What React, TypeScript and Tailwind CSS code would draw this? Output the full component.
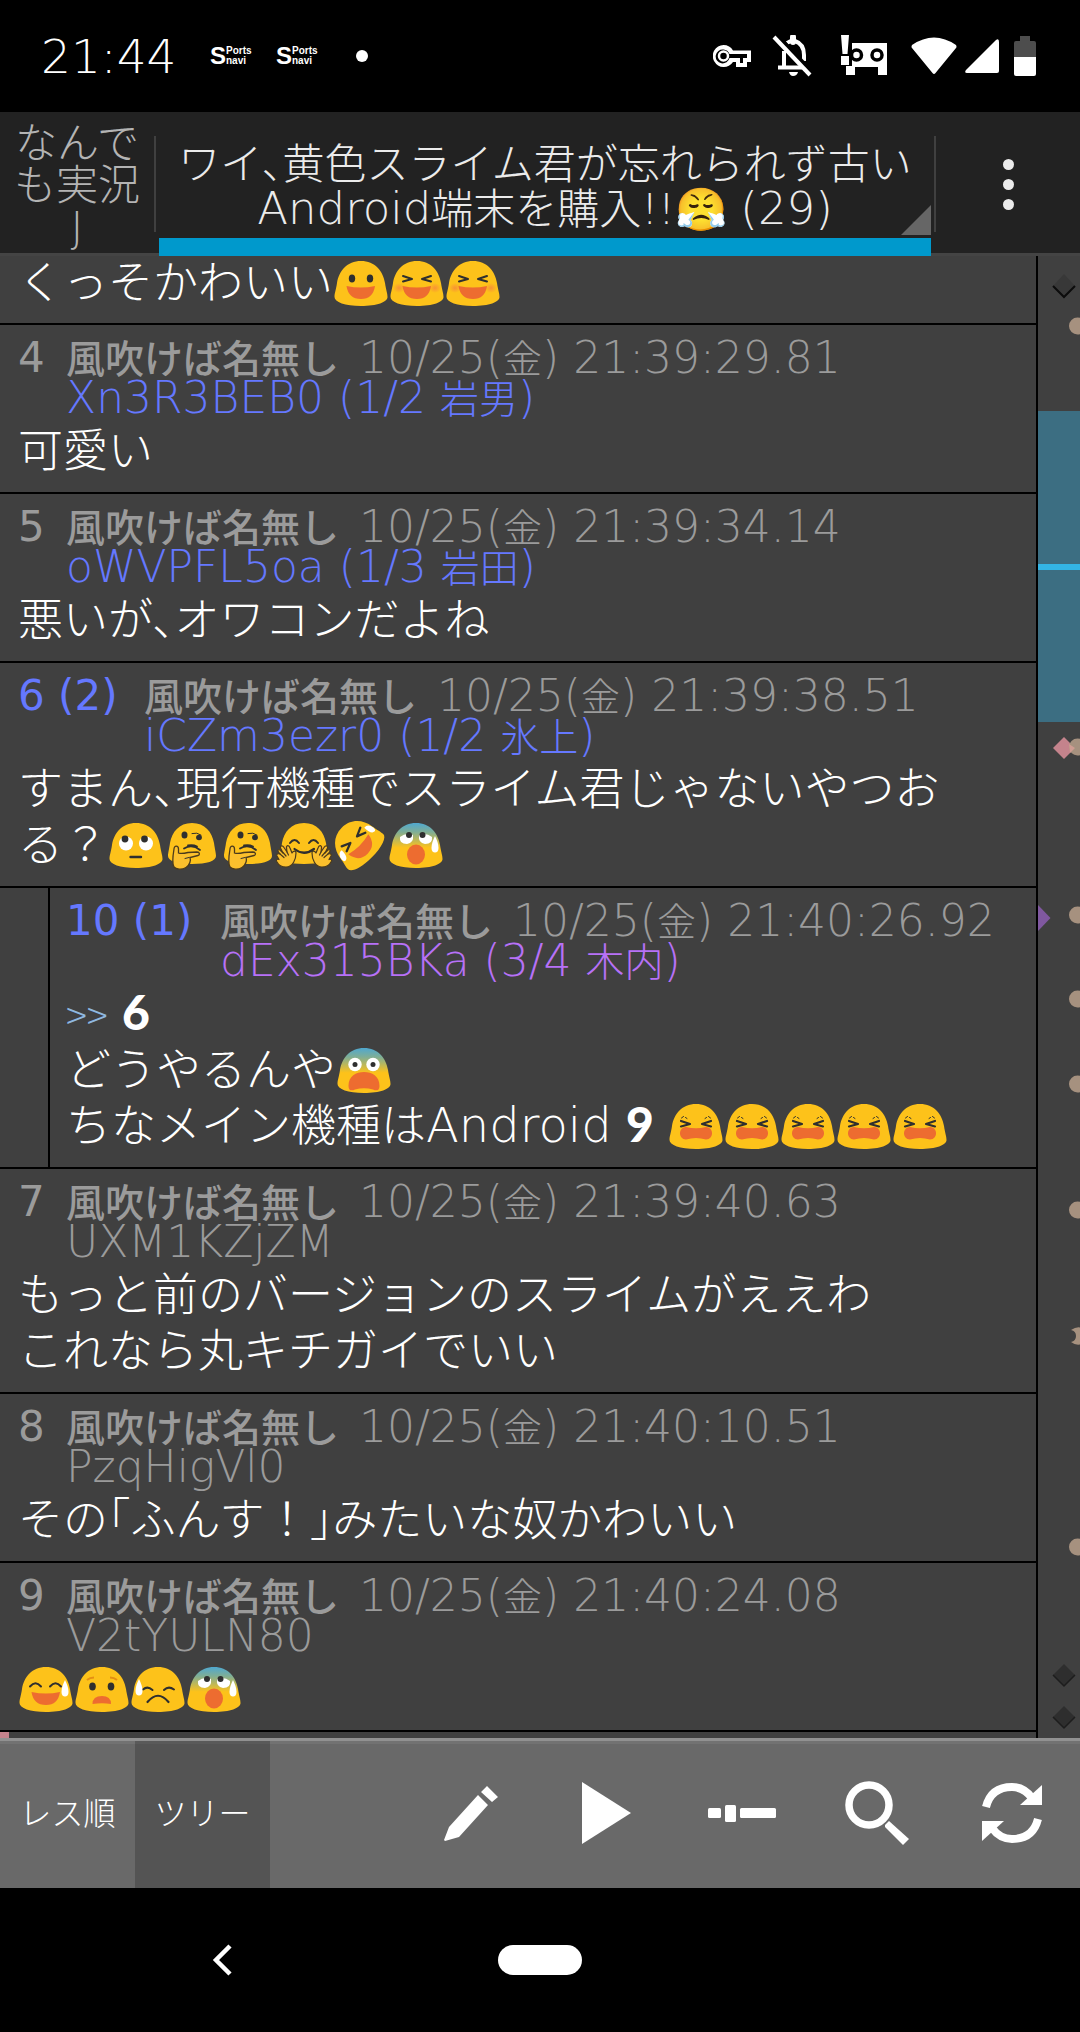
import type { ReactNode } from "react";

type Face =
  | "grin"
  | "laugh"
  | "roll"
  | "think"
  | "hug"
  | "rofl"
  | "anxious"
  | "scream"
  | "weary"
  | "sweatSmile"
  | "worried"
  | "coldSweat";

const labels: Record<Face, string> = {
  grin: "😃",
  laugh: "😆",
  roll: "🙄",
  think: "🤔",
  hug: "🤗",
  rofl: "🤣",
  anxious: "😰",
  scream: "😨",
  weary: "😫",
  sweatSmile: "😅",
  worried: "😟",
  coldSweat: "😓",
};

const BLOB =
  "M28 2C42 2 50 12 52 24C53 31 54.5 34 54.5 38C54.5 43 44 47 28 47C12 47 1.5 43 1.5 38C1.5 34 3 31 4 24C6 12 14 2 28 2Z";
const SMALL_BLOB =
  "M28 2C41 2 48 11 50 22C51 29 52 32 52 35C52 40 43 43 28 43C13 43 4 40 4 35C4 32 5 29 6 22C8 11 15 2 28 2Z";

const Dark = ({ d, w = 2 }: { d: string; w?: number }) => (
  <path d={d} fill="none" stroke="#2f2f2f" strokeWidth={w} strokeLinecap="round" strokeLinejoin="round" />
);

const Cheeks = () => (
  <>
    <ellipse cx="10" cy="29" rx="6" ry="5" fill="url(#cheek)" />
    <ellipse cx="46" cy="29" rx="6" ry="5" fill="url(#cheek)" />
  </>
);

const BigSmile = () => <path d="M13.500 27Q28 30 42 27Q40 40 28 40Q15.500 40 13.500 27Z" fill="#ed6c30" />;

const Tear = ({ x, y }: { x: number; y: number }) => (
  <path
    d="M0 -8C2 -4 3.500 0 3.500 4C3.500 7 2 8.500 0 8.500C-2 8.500 -3.500 7 -3.500 4C-3.500 0 -2 -4 0 -8Z"
    transform={`translate(${x} ${y})`}
    fill="#fff"
  />
);

const Hand = () => (
  <g fill="#fbc02d" stroke="#4a3a1c" strokeWidth="1.200" strokeLinecap="round" strokeLinejoin="round">
    <path d="M4 33C1 30 1.500 28 4 29L7 32L4.500 27C4 24.500 6.500 24 8 26.500L11 31L10.500 26.500C10.500 24 13 24 14 27L16 32C17 30 20 29 20 32C20 38 17 46 10 46C4 46 2 43 1 41C-0.500 39 1 37.500 3 38.500L1 35C0 33 2 32 4 33Z" />
    <path d="M4 33L8 36.500M7 31.500L10 35M11 31L12.500 34" fill="none" />
  </g>
);

const faces: Record<Face, ReactNode> = {
  grin: (
    <>
      <ellipse cx="19" cy="19.500" rx="3.200" ry="4" fill="#2f2f2f" />
      <ellipse cx="37" cy="19.500" rx="3.200" ry="4" fill="#2f2f2f" />
      <BigSmile />
    </>
  ),
  laugh: (
    <>
      <Cheeks />
      <Dark d="M14 17L23 20L14 22.500M42 17L33 20L42 22.500" />
      <BigSmile />
    </>
  ),
  roll: (
    <>
      <circle cx="18" cy="22.500" r="7" fill="#fff" />
      <circle cx="38" cy="22.500" r="7" fill="#fff" />
      <circle cx="17" cy="18" r="3.400" fill="#2f2f2f" />
      <circle cx="36.500" cy="18" r="3.400" fill="#2f2f2f" />
      <Dark d="M22.500 36H33" w={2.4} />
    </>
  ),
  think: (
    <>
      <ellipse cx="20.500" cy="14" rx="3" ry="3.500" fill="#2f2f2f" />
      <ellipse cx="35" cy="16.500" rx="2.900" ry="2.700" fill="#2f2f2f" />
      <Dark d="M28 12.500Q33 11 37 14" w={1} />
      <Dark d="M20 27.500Q28 22.500 36 29M24 24.500Q29 23.500 33 25.500" w={1.8} />
      <path
        d="M10 28C10 24 14.500 24.500 14.500 28L14.500 32C17 33 20 32.500 24 31.500L33 31C36 31 36 34 34 34.500L26 36.500C27 39 26 44 22 46.500C18 49 12 48.500 10 46C8 43 9 34 10 28Z"
        fill="#fbc02d"
        stroke="#4a3a1c"
        strokeWidth="1.300"
      />
      <Dark d="M25 36.500L21 37.500" w={1} />
    </>
  ),
  hug: (
    <>
      <Cheeks />
      <Dark d="M14 22Q18.500 16 23 22M33 22Q37.500 16 42 22" />
      <Dark d="M18.500 28Q28 35.500 38 28" w={2.2} />
      <Hand />
      <g transform="translate(56 0) scale(-1 1)">
        <Hand />
      </g>
    </>
  ),
  rofl: (
    <>
      <Dark d="M14 16L23 20L14 23.500M42 16L33 20L42 23.500" w={2.4} />
      <path d="M13 27Q28 31 43 27Q41 41 28 41Q15 41 13 27Z" fill="#ed6c30" />
      <path d="M11 19Q5 18 4 26Q4 31 8 29Q11 27 11 19ZM45 19Q51 18 52 26Q52 31 48 29Q45 27 45 19Z" fill="#fff" />
    </>
  ),
  anxious: (
    <>
      <path d="M12 16Q11 23 19 23Q26 22 25 14Q18 11 12 16Z" fill="#fff" />
      <path d="M44 16Q45 23 37 23Q30 22 31 14Q38 11 44 16Z" fill="#fff" />
      <circle cx="21" cy="14" r="3" fill="#2f2f2f" />
      <circle cx="34.500" cy="14" r="3" fill="#2f2f2f" />
      <ellipse cx="28" cy="33.500" rx="9" ry="10" fill="#ed6c30" />
      <Tear x={47} y={23} />
    </>
  ),
  scream: (
    <>
      <circle cx="19" cy="18.500" r="6.700" fill="#fff" />
      <circle cx="37" cy="18.500" r="6.700" fill="#fff" />
      <circle cx="19" cy="18.500" r="2.500" fill="#2f2f2f" />
      <circle cx="37" cy="18.500" r="2.500" fill="#2f2f2f" />
      <path d="M12.500 40C12.500 30 20 26 28 26C36 26 43.500 30 43.500 40C43.500 45 40 45 37 43.500Q28 41 19 43.500C16 45 12.500 45 12.500 40Z" fill="#ed6c30" />
    </>
  ),
  weary: (
    <>
      <Dark d="M13 19L22 22L13 24.500M43 19L34 22L43 24.500" w={2.2} />
      <Dark d="M13.500 16L15.500 14.500M17.500 15.500L19 16.500M42.500 16L40.500 14.500M38.500 15.500L37 16.500" w={1} />
      <path d="M18 25Q28 27.500 38 25C46 25 46 37.500 38 37.500Q28 34.500 18 37.500C10 37.500 10 25 18 25Z" fill="#ed6c30" />
    </>
  ),
  sweatSmile: (
    <>
      <Dark d="M12 21.500Q17.500 15 23 21.500M32 21.500Q37.500 15 43 21.500" />
      <BigSmile />
      <Tear x={47} y={23} />
    </>
  ),
  worried: (
    <>
      <path d="M13 15Q16 12.500 20 12.500M43 15Q40 12.500 36 12.500" fill="none" stroke="#e58f12" strokeWidth="2" />
      <ellipse cx="18.500" cy="21.500" rx="3.300" ry="4" fill="#2f2f2f" />
      <ellipse cx="37" cy="21.500" rx="3.300" ry="4" fill="#2f2f2f" />
      <path d="M18.500 39Q18.500 31 28 31Q37 31 37 39Q28 37.500 18.500 39Z" fill="#ed6c30" />
    </>
  ),
  coldSweat: (
    <>
      <Dark d="M13 24.500Q17.500 20.500 22.500 25M34 25Q38.500 20.500 44 24.500" />
      <Dark d="M17.500 37Q28 24.500 38.500 37" w={2.2} />
      <Tear x={9} y={22} />
    </>
  ),
};

function Emoji({ face, count = 1 }: { face: Face; count?: number }) {
  const shocked = face === "anxious" || face === "scream";
  const small = face === "think" || face === "hug";
  return (
    <>
      {Array.from({ length: count }, (_, i) => (
        <svg
          key={i}
          role="img"
          aria-label={labels[face]}
          viewBox="0 0 56 50"
          className="inline-block h-[50px] w-14 overflow-visible align-[-10px]"
        >
          <g transform={face === "rofl" ? "translate(25 22) rotate(-45) scale(0.94) translate(-28 -25)" : undefined}>
            <path d={small ? SMALL_BLOB : BLOB} fill={shocked ? "url(#shock)" : "#fdc21a"} />
            {faces[face]}
          </g>
        </svg>
      ))}
    </>
  );
}

// Kanji next to the wide latin face reads better a step smaller
const Kanji = ({ children }: { children: ReactNode }) => <span className="text-[39px]">{children}</span>;

const Strong = ({ children }: { children: ReactNode }) => (
  <span className="font-['Lato',sans-serif] text-[48px] leading-none font-black">{children}</span>
);

type Post = {
  no: string;
  replied?: boolean;
  nested?: boolean;
  time: string;
  id: string;
  count?: string;
  nick?: string;
  idColor: string;
  body: ReactNode[];
};

const posts: Post[] = [
  {
    no: "4",
    time: "21:39:29.81",
    id: "Xn3R3BEB0",
    count: "1/2",
    nick: "岩男",
    idColor: "text-[#6578ff]",
    body: ["可愛い"],
  },
  {
    no: "5",
    time: "21:39:34.14",
    id: "oWVPFL5oa",
    count: "1/3",
    nick: "岩田",
    idColor: "text-[#6578ff]",
    body: ["悪いが、オワコンだよね"],
  },
  {
    no: "6 (2)",
    replied: true,
    time: "21:39:38.51",
    id: "iCZm3ezr0",
    count: "1/2",
    nick: "氷上",
    idColor: "text-[#6578ff]",
    body: [
      "すまん、現行機種でスライム君じゃないやつお",
      <>
        る？
        <Emoji face="roll" />
        <Emoji face="think" count={2} />
        <Emoji face="hug" />
        <Emoji face="rofl" />
        <Emoji face="anxious" />
      </>,
    ],
  },
  {
    no: "10 (1)",
    replied: true,
    nested: true,
    time: "21:40:26.92",
    id: "dEx315BKa",
    count: "3/4",
    nick: "木内",
    idColor: "text-[#b771f7]",
    body: [
      <>
        <a href="#6" className="font-['Noto_Sans_CJK_JP',sans-serif] text-[39px] leading-none text-[#8fb8e0]">
          &gt;&gt;
        </a>{" "}
        <Strong>6</Strong>
      </>,
      <>
        どうやるんや
        <Emoji face="scream" />
      </>,
      <>
        ちなメイン機種は<span className="text-[48px] leading-none">Android</span> <Strong>9</Strong>{" "}
        <Emoji face="weary" count={5} />
      </>,
    ],
  },
  {
    no: "7",
    time: "21:39:40.63",
    id: "UXM1KZjZM",
    idColor: "text-[#9b9b9b]",
    body: ["もっと前のバージョンのスライムがええわ", "これなら丸キチガイでいい"],
  },
  {
    no: "8",
    time: "21:40:10.51",
    id: "PzqHigVl0",
    idColor: "text-[#9b9b9b]",
    body: [
      <>
        その「ふんす<span className="[font-feature-settings:normal]">！</span>」みたいな奴かわいい
      </>,
    ],
  },
  {
    no: "9",
    time: "21:40:24.08",
    id: "V2tYULN80",
    idColor: "text-[#9b9b9b]",
    body: [
      <>
        <Emoji face="sweatSmile" />
        <Emoji face="worried" />
        <Emoji face="coldSweat" />
        <Emoji face="anxious" />
      </>,
    ],
  },
];

function PostRow({ post }: { post: Post }) {
  return (
    <li id={post.no.split(" ")[0]} className={`border-b-2 border-black ${post.nested ? "pl-12" : ""}`}>
      <article className={`pt-[13px] pb-3.5 ${post.nested ? "border-l-2 border-black pl-4" : "pl-[18px]"}`}>
        <div className="flex text-[44px] leading-10 whitespace-nowrap text-[#9b9b9b]">
          <span
            className={`shrink-0 text-[42px] font-normal ${post.replied ? "text-[#6578ff]" : ""} ${
              post.nested ? "w-[154px]" : post.replied ? "w-[126px]" : "w-12"
            }`}
          >
            {post.no}
          </span>
          <div>
            <div className="flex h-10 items-baseline gap-5">
              <span className="text-[39px] font-medium">風吹けば名無し</span>
              <time>
                10/25(<Kanji>金</Kanji>) {post.time}
              </time>
            </div>
            <div className={`h-10 ${post.idColor}`}>
              {post.id}
              {post.count && (
                <>
                  {" "}
                  ({post.count} <Kanji>{post.nick}</Kanji>)
                </>
              )}
            </div>
          </div>
        </div>
        <div className="mt-1 text-[45px] leading-[60px] whitespace-nowrap">
          {post.body.map((line, i) => (
            <p key={i} className="h-14">
              {line}
            </p>
          ))}
        </div>
      </article>
    </li>
  );
}

function SportsNavi() {
  return (
    <span className="flex w-[42px] items-center font-['Liberation_Sans',sans-serif] font-bold">
      <span className="text-[24px] leading-none">S</span>
      <span className="flex flex-col text-[10px] leading-[10px]">
        <span>Ports</span>
        <span>navi</span>
      </span>
    </span>
  );
}

function StatusBar() {
  return (
    <div className="flex h-28 items-center bg-black pr-11 pl-[41px]">
      <span className="w-[135px] text-[47px] leading-none">21:44</span>
      <div className="ml-[34px] flex items-center gap-6">
        <SportsNavi />
        <SportsNavi />
        <span className="ml-3.5 h-3 w-3 rounded-full bg-white" />
      </div>
      <div className="ml-auto flex items-center text-white">
        {/* VPN key */}
        <svg width="38" height="23" viewBox="0 0 38 23" className="mr-[21px]">
          <path
            fillRule="evenodd"
            d="M10.500 0A11 11 0 0 1 20 5.500H38V17H34V22H23V17H20A11 11 0 1 1 10.500 0ZM10.500 4.500A7 7 0 1 0 16.500 13H27V18H30V13H34V9H16.500A7 7 0 0 0 10.500 4.500Z"
            fill="currentColor"
          />
          <circle cx="10.500" cy="11" r="4.500" fill="none" stroke="currentColor" strokeWidth="2.500" />
        </svg>
        {/* Muted bell */}
        <svg width="40" height="42" viewBox="0 0 40 42" fill="none" stroke="currentColor" strokeWidth="4" className="mr-[29px]">
          <path d="M12 16V32M6 32.500H30M15 8Q19 5 23 6Q32 9 32 20V26" />
          <path d="M21 2V7" strokeWidth="6" strokeLinecap="round" />
          <path d="M17 37H26Q25 41 21 41Q18 41 17 37Z" fill="currentColor" stroke="none" />
          <path d="M4 -1L41 38" stroke="#000" strokeWidth="4" />
          <path d="M2 2L38 40" />
        </svg>
        {/* Robot with alert */}
        <svg width="46" height="42" viewBox="0 0 46 42" className="mr-6">
          <path d="M11 8H46V40H37V32H14V40H5V31H11Z" fill="currentColor" />
          <g fill="#fff" stroke="#000" strokeWidth="3.500">
            <circle cx="15.500" cy="20" r="5" />
            <circle cx="36" cy="20" r="5" />
          </g>
          <path d="M0 0H8L6.500 19H1.500ZM0 21H8V30H0Z" fill="currentColor" stroke="#000" strokeWidth="2" paintOrder="stroke" />
        </svg>
        {/* Wi-Fi */}
        <svg width="46" height="38" viewBox="0 0 46 38" className="mr-2">
          <path d="M1 8Q23 -7 45 8Q46 10 45 11L24.500 36Q23 38 21.500 36L1 11Q0 10 1 8Z" fill="currentColor" />
        </svg>
        {/* Cell signal */}
        <svg width="34" height="34" viewBox="0 0 34 34" className="mr-[15px]">
          <path d="M31 1Q34 -1 34 3V32Q34 34 32 34H2Q-1 34 1 31Z" fill="currentColor" />
        </svg>
        {/* Battery */}
        <svg width="22" height="40" viewBox="0 0 22 40">
          <path d="M6 0H16V5H20Q22 5 22 7V21H0V7Q0 5 2 5H6Z" fill="#4d4d4d" />
          <path d="M0 21H22V38Q22 40 20 40H2Q0 40 0 38Z" fill="currentColor" />
        </svg>
      </div>
    </div>
  );
}

function Header() {
  return (
    <header className="flex h-36 bg-[#222222] text-[42px] leading-[42px] shadow-[inset_0_-3px_0_#444444]">
      <button className="w-[154px] shrink-0 px-3 pt-1 text-center text-[#b4b4b4]">なんでも実況J</button>
      <span className="mt-6 h-24 w-0.5 shrink-0 bg-[#404040]" />
      <button className="relative mx-[3px] flex-1 border-b-[18px] border-[#0099cc] pt-6 text-center whitespace-nowrap text-[#ebebeb]">
        ワイ、黄色スライム君が忘れられず古い
        <br />
        <span className="text-[45px] leading-none">Android</span>端末を購入!!😤{" "}
        <span className="text-[45px] leading-none">(29)</span>
        <svg width="30" height="30" viewBox="0 0 30 30" className="absolute right-0 bottom-[3px]">
          <path d="M30 0V30H0Z" fill="#666666" />
        </svg>
      </button>
      <span className="mt-6 h-24 w-0.5 shrink-0 bg-[#404040]" />
      <button aria-label="メニュー" className="flex w-36 shrink-0 flex-col items-center justify-center gap-[9px]">
        <span className="h-[11px] w-[11px] rounded-full bg-[#ebebeb]" />
        <span className="h-[11px] w-[11px] rounded-full bg-[#ebebeb]" />
        <span className="h-[11px] w-[11px] rounded-full bg-[#ebebeb]" />
      </button>
    </header>
  );
}

const mapDots = [70, 491, 659, 743, 828, 954, 1291];

// Overview strip: visible range, own posts and images along the thread
function ThreadMap() {
  return (
    <aside className="w-11 shrink-0 overflow-hidden border-l-2 border-black">
      <svg width="42" height="1482" viewBox="0 0 42 1482">
        <rect y="155" width="42" height="311" fill="#3c6e82" />
        <rect y="308" width="42" height="6" fill="#33b5e5" />
        <path d="M26 18L37 30L26 42L15 30Z" fill="#383838" />
        <path d="M15 30L26 41L37 30" fill="none" stroke="#0c0c0c" strokeWidth="2" />
        <path d="M26 481L37 492L26 503L15 492Z" fill="#c4838c" />
        {mapDots.map((y) => (
          <circle key={y} cx="39.500" cy={y} r="8.500" fill="#a6917f" />
        ))}
        <path d="M31 488L37 492L32 497Z" fill="#cf9c92" />
        <path d="M33 1074Q39 1070 44 1072V1088Q38 1090 33 1086Q38 1085 38 1080Q38 1075 33 1074Z" fill="#a6917f" />
        <path d="M0 649L12.500 662L0 675Z" fill="#8058a0" />
        <path d="M26 1408L37 1419L26 1430L15 1419ZM26 1450L37 1461L26 1472L15 1461Z" fill="#2e2e2e" />
        <path d="M15 1419L26 1430L37 1419M15 1461L26 1472L37 1461" fill="none" stroke="#1d1d1d" strokeWidth="1.500" />
      </svg>
    </aside>
  );
}

const actions = [
  {
    label: "書き込み",
    icon: <path d="M7 44L36 12L46 22L17 54L3 58L2 57ZM39 9L45 3L56 14L50 19Z" />,
  },
  { label: "再生", icon: <path d="M5 -1L54 30L5 61Z" /> },
  {
    label: "スクロール",
    icon: (
      <>
        <rect x="-4" y="25" width="13" height="10" rx="1.500" />
        <rect x="13" y="22" width="11" height="17" rx="1.500" />
        <rect x="28" y="25" width="36" height="10" rx="1.500" />
      </>
    ),
  },
  {
    label: "検索",
    icon: (
      <>
        <circle cx="22" cy="22" r="20" fill="none" stroke="currentColor" strokeWidth="7.500" />
        <path d="M38 42L42 38L62 56L56 62L38 44Z" />
      </>
    ),
  },
  {
    label: "更新",
    icon: (
      <>
        <path d="M4 24Q9 4 30 4Q42 4 50 15" fill="none" stroke="currentColor" strokeWidth="8" />
        <path d="M60 2V22H38Z" />
        <path d="M56 36Q51 56 30 56Q18 56 10 45" fill="none" stroke="currentColor" strokeWidth="8" />
        <path d="M0 58V38H22Z" />
      </>
    ),
  },
];

function Toolbar() {
  return (
    <div className="grid h-[150px] grid-cols-8 border-t-[3px] border-[#919191] bg-[#696969] text-[32px]">
      <button className="border-t-[3px] border-[#727272] pb-1">レス順</button>
      <button className="border-t-[3px] border-[#5a5a5a] bg-[#545454] pb-1">ツリー</button>
      <span className="border-t-[3px] border-[#727272]" />
      {actions.map((action) => (
        <button
          key={action.label}
          aria-label={action.label}
          className="flex items-center justify-center border-t-[3px] border-[#727272] pr-0.5 pb-1.5"
        >
          <svg width="60" height="60" viewBox="0 0 60 60" fill="currentColor" className="overflow-visible">
            {action.icon}
          </svg>
        </button>
      ))}
    </div>
  );
}

function NavigationBar() {
  return (
    <nav className="grid h-36 grid-cols-[1fr_auto_1fr] items-center bg-black">
      <button aria-label="戻る" className="justify-self-center pr-[54px]">
        <svg width="20" height="32" viewBox="0 0 20 32" fill="none" stroke="currentColor" strokeWidth="4.500">
          <path d="M18 2L4 16L18 30" />
        </svg>
      </button>
      <button aria-label="ホーム" className="h-[30px] w-[84px] rounded-full bg-white" />
    </nav>
  );
}

export default function App() {
  return (
    <div className="flex min-h-screen flex-col bg-black font-['DejaVu_Sans','Noto_Sans_CJK_JP',sans-serif] font-extralight text-white [font-feature-settings:'halt']">
      <svg width="0" height="0" className="absolute">
        <defs>
          <linearGradient id="shock" x1="0" y1="0" x2="0" y2="1">
            <stop offset="0" stopColor="#4fa8d0" />
            <stop offset="0.200" stopColor="#7fae96" />
            <stop offset="0.550" stopColor="#fdc21a" />
          </linearGradient>
          <radialGradient id="cheek">
            <stop offset="0" stopColor="#f7863c" stopOpacity="0.800" />
            <stop offset="1" stopColor="#f7863c" stopOpacity="0" />
          </radialGradient>
        </defs>
      </svg>
      <StatusBar />
      <Header />
      <main className="flex flex-1 bg-[#404040]">
        <ol className="min-w-0 flex-1 overflow-hidden">
          <li className="border-b-2 border-black pb-[15px] pl-[18px] text-[45px] leading-[56px] whitespace-nowrap">
            <p className="h-[52px]">
              くっそかわいい
              <Emoji face="grin" />
              <Emoji face="laugh" count={2} />
            </p>
          </li>
          {posts.map((post) => (
            <PostRow key={post.no} post={post} />
          ))}
          <li className="h-1.5 w-[9px] bg-[#c4838c]" />
        </ol>
        <ThreadMap />
      </main>
      <Toolbar />
      <NavigationBar />
    </div>
  );
}
